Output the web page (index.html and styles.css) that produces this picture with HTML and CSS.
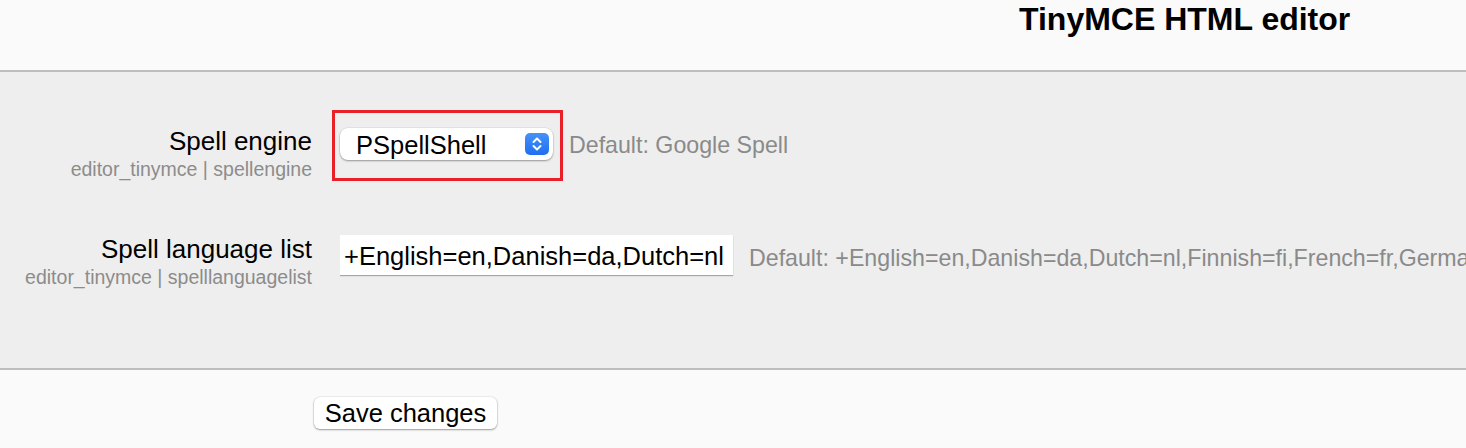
FILE: index.html
```html
<!DOCTYPE html>
<html lang="en">
<head>
<meta charset="utf-8">
<title>TinyMCE HTML editor</title>
<link rel="stylesheet" href="styles.css">
</head>
<body>
<header class="page-header">
  <h1 class="page-title">TinyMCE HTML editor</h1>
</header>
<main class="settings">
  <div class="setting-row">
    <div class="setting-label">
      <label class="label-main">Spell engine</label>
      <span class="label-sub">editor_tinymce | spellengine</span>
    </div>
    <div class="setting-control">
      <div class="select-wrap">
        <div class="select">
          <span class="select-value">PSpellShell</span>
          <svg class="stepper" width="24" height="22" viewBox="0 0 24 22" aria-hidden="true">
            <defs>
              <linearGradient id="stepGrad" x1="0" y1="0" x2="0" y2="1">
                <stop offset="0" stop-color="#4592f8"/>
                <stop offset="1" stop-color="#1f6ff1"/>
              </linearGradient>
            </defs>
            <rect x="0" y="0" width="24" height="22" rx="5" fill="url(#stepGrad)"/>
            <polyline points="8.5,9 12,5.5 15.5,9" fill="none" stroke="#fff" stroke-width="2" stroke-linecap="round" stroke-linejoin="round"/>
            <polyline points="8.5,13 12,16.5 15.5,13" fill="none" stroke="#fff" stroke-width="2" stroke-linecap="round" stroke-linejoin="round"/>
          </svg>
        </div>
        <span class="highlight-box"></span>
      </div>
      <span class="default-text">Default: Google Spell</span>
    </div>
  </div>
  <div class="setting-row">
    <div class="setting-label">
      <label class="label-main">Spell language list</label>
      <span class="label-sub">editor_tinymce | spelllanguagelist</span>
    </div>
    <div class="setting-control">
      <input class="text-input" type="text" value="+English=en,Danish=da,Dutch=nl">
      <span class="default-text">Default: +English=en,Danish=da,Dutch=nl,Finnish=fi,French=fr,German=de,Italian=it,Polish=pl,Portuguese=pt,Spanish=es,Swedish=sv</span>
    </div>
  </div>
</main>
<footer class="actions">
  <button class="save-button" type="button">Save changes</button>
</footer>
</body>
</html>
```

FILE: styles.css
```css
html, body {
  margin: 0;
  padding: 0;
  height: 100%;
}

body {
  font-family: "Liberation Sans", Arial, Helvetica, sans-serif;
  background: #fafafa;
  color: #000;
  overflow: hidden;
}

.page-header {
  height: 70px;
  background: #fafafa;
  border-bottom: 2px solid #bdbdbd;
  padding-left: 1019px;
}

.page-title {
  margin: 0;
  font-size: 32px;
  line-height: 38px;
  font-weight: bold;
}

.settings {
  background: #eeeeee;
  border-bottom: 2px solid #bdbdbd;
  padding: 54px 0 78px;
  display: flex;
  flex-direction: column;
  gap: 52px;
}

.setting-row {
  display: grid;
  grid-template-columns: 312px 1fr;
  column-gap: 28px;
  align-items: start;
}

.setting-label {
  display: flex;
  flex-direction: column;
  align-items: flex-end;
  text-align: right;
}

.label-main {
  font-size: 26px;
  line-height: 30px;
}

.label-sub {
  font-size: 19.5px;
  line-height: 26px;
  color: #8c8c8c;
}

.setting-control {
  display: flex;
  align-items: center;
  gap: 16px;
  white-space: nowrap;
  min-width: 0;
  overflow: hidden;
}

.select-wrap {
  position: relative;
  flex-shrink: 0;
  margin-top: 2px;
}

.setting-control:has(.select-wrap) {
  overflow: visible;
}

.select {
  box-sizing: border-box;
  width: 213px;
  height: 32px;
  background: #fff;
  border-radius: 8px;
  box-shadow: 0 1px 2px rgba(0, 0, 0, 0.35), 0 0 0 0.5px rgba(0, 0, 0, 0.08);
  display: flex;
  align-items: center;
  justify-content: space-between;
  padding: 2px 4px 0 16px;
}

.select-value {
  font-size: 25.5px;
  line-height: 30px;
}

.stepper {
  display: block;
  margin-top: -2px;
}

.highlight-box {
  position: absolute;
  top: -18px;
  left: -8px;
  right: -10px;
  bottom: -21px;
  border: 3px solid #e8202a;
  pointer-events: none;
}

.default-text {
  font-size: 23.2px;
  line-height: 30px;
  color: #8a8a8a;
  padding-top: 4px;
}

.text-input {
  box-sizing: border-box;
  flex-shrink: 0;
  width: 393px;
  height: 40px;
  margin: 1px 0 2px;
  padding: 2px 4px 0;
  border: none;
  background: #fff;
  box-shadow: 0 1px 1px rgba(0, 0, 0, 0.3);
  font-family: inherit;
  font-size: 25.5px;
  color: #000;
  outline: none;
}

.actions {
  padding: 27px 0 0 314px;
}

.save-button {
  box-sizing: border-box;
  width: 183px;
  height: 32px;
  padding: 0;
  border: none;
  border-radius: 6px;
  background: #fff;
  box-shadow: 0 1px 2px rgba(0, 0, 0, 0.35), 0 0 0 0.5px rgba(0, 0, 0, 0.1);
  font-family: inherit;
  font-size: 25.5px;
  line-height: 30px;
  color: #000;
}
```
